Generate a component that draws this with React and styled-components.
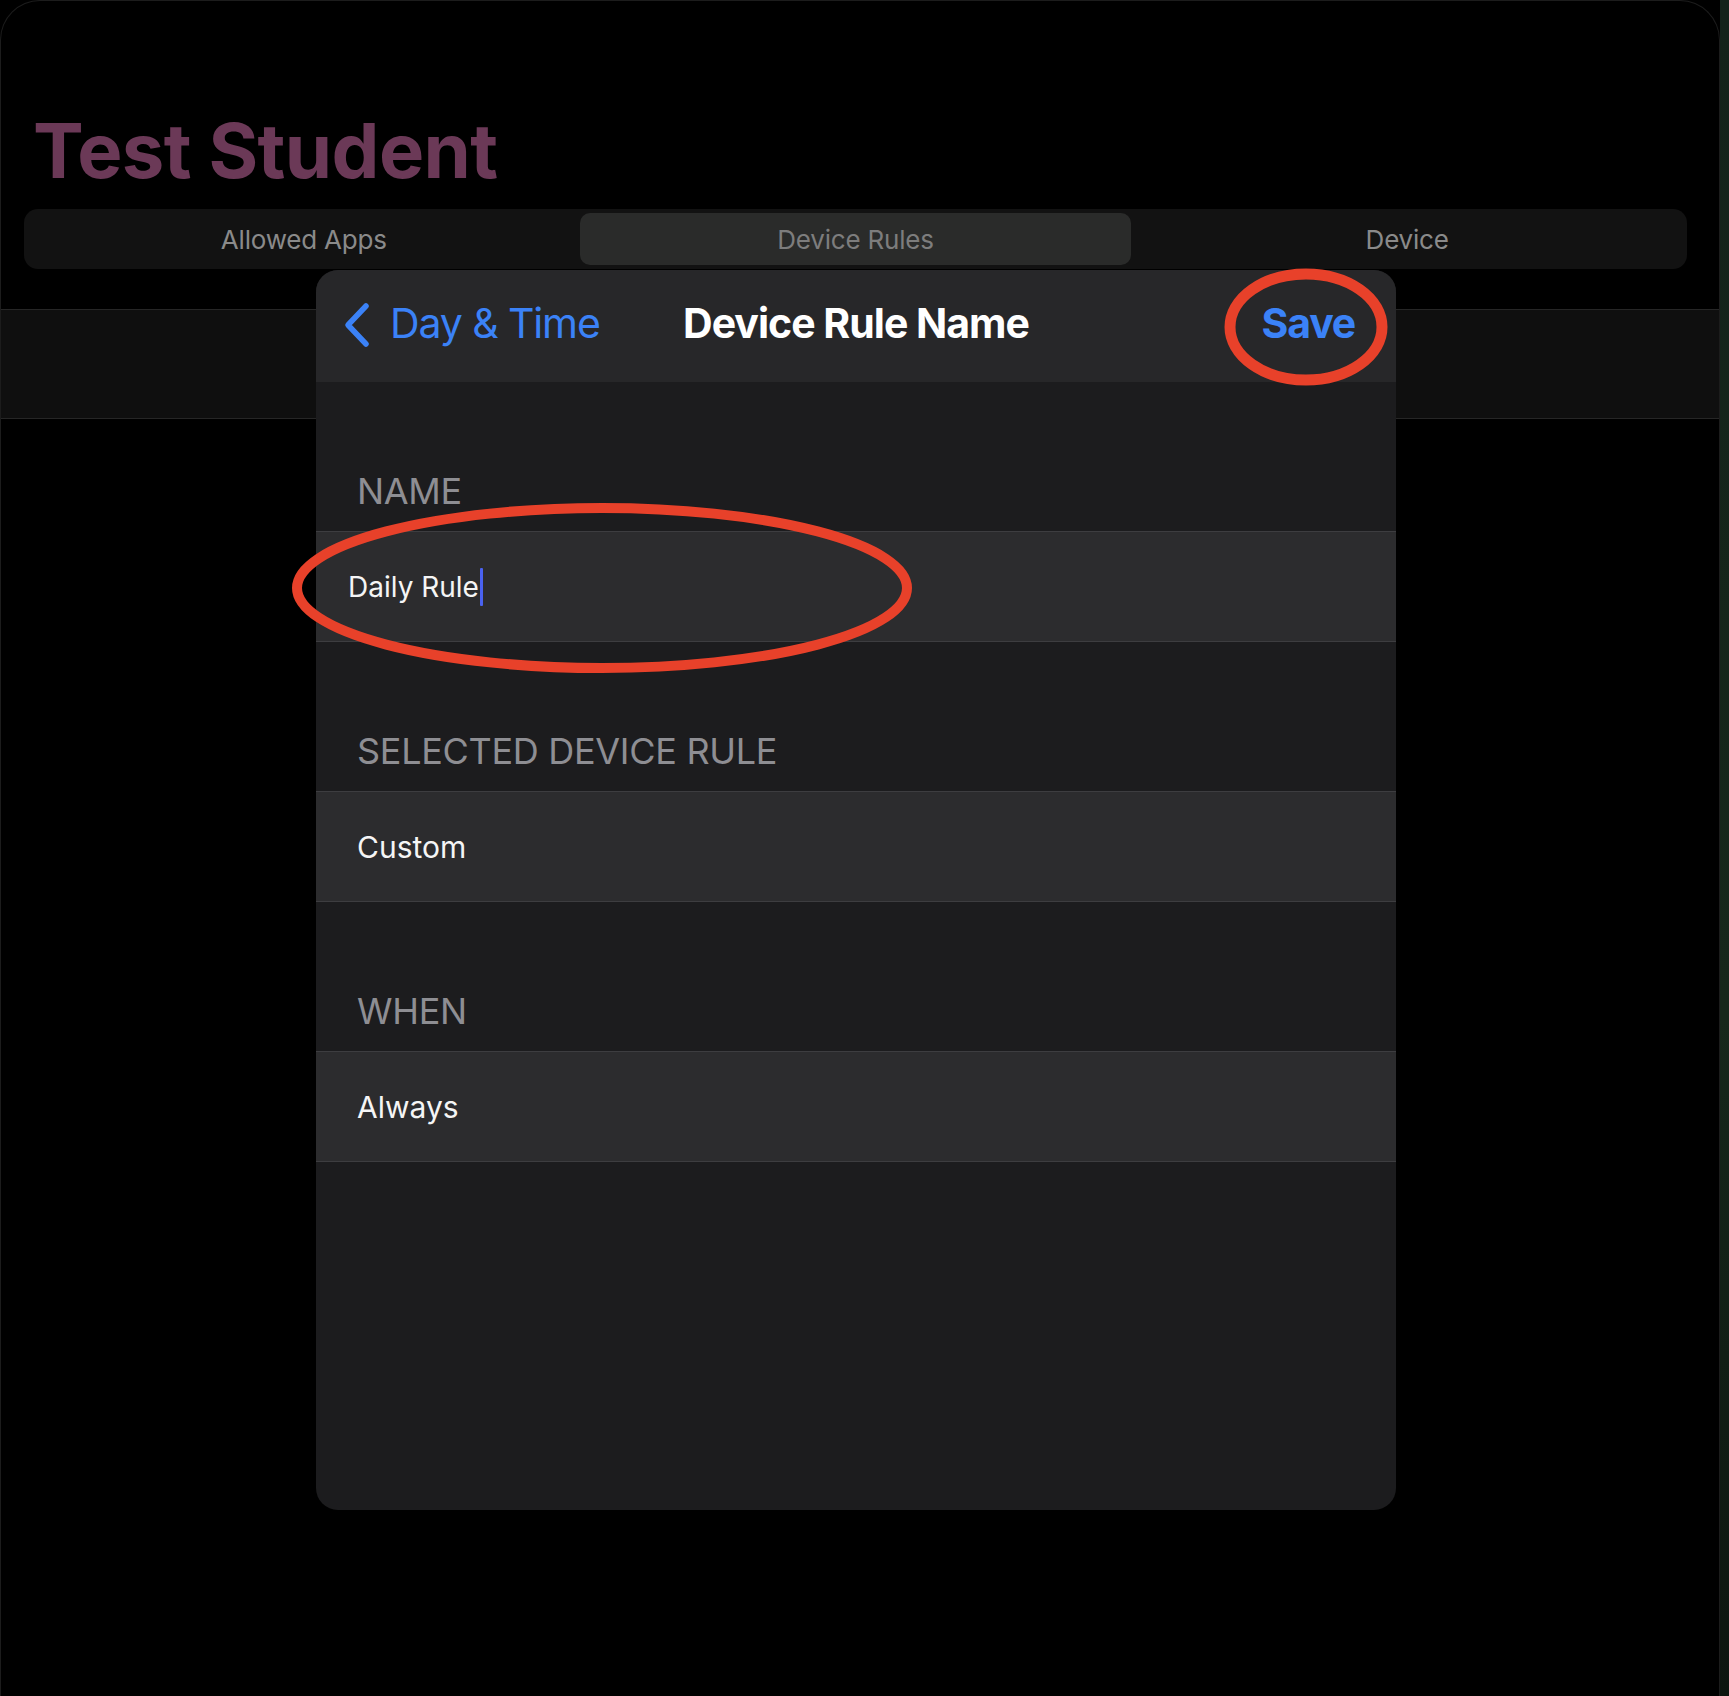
import React from 'react'
import styled, { createGlobalStyle } from 'styled-components'

const GlobalStyle = createGlobalStyle`
    body {
        margin: 0;
        background: #000000;
        font-family: Inter, "Noto Sans", sans-serif;
    }
`

const sections = [
    { title: 'NAME', value: 'Daily Rule', editing: true },
    { title: 'SELECTED DEVICE RULE', value: 'Custom' },
    { title: 'WHEN', value: 'Always' },
]

const tabs = ['Allowed Apps', 'Device Rules', 'Device']

function Chevron() {
    return (
        <svg width="28" height="46" viewBox="0 0 28 46">
            <path d="M23 4 L5 23 L23 42" fill="none" stroke="#3b82f7" strokeWidth="5.5" strokeLinecap="round" strokeLinejoin="round" />
        </svg>
    )
}

function App() {
    return (
        <Page>
            <GlobalStyle />
            <Screen>
                <Title>Test Student</Title>
                <Segmented>
                    {tabs.map((t) => (
                        <Segment key={t} active={t === 'Device Rules'}>{t}</Segment>
                    ))}
                </Segmented>
                <Band />

                <Sheet>
                    <NavBar>
                        <BackButton>
                            <Chevron />
                            <span>Day &amp; Time</span>
                        </BackButton>
                        <NavTitle>Device Rule Name</NavTitle>
                        <SaveButton>Save</SaveButton>
                    </NavBar>
                    {sections.map((s) => (
                        <Section key={s.title}>
                            <SectionHeader>{s.title}</SectionHeader>
                            <Row editing={s.editing}>
                                <RowText small={s.editing}>{s.value}</RowText>
                                {s.editing && <Caret />}
                            </Row>
                        </Section>
                    ))}
                </Sheet>

                <Marks width="1719" height="1696" viewBox="1 0 1719 1696">
                    <ellipse cx="602" cy="587" rx="305" ry="80" fill="none" stroke="#e8412a" strokeWidth="10" />
                    <ellipse cx="1306" cy="326" rx="76" ry="53" fill="none" stroke="#e8412a" strokeWidth="11" />
                </Marks>
            </Screen>
            <EdgeStrip />
        </Page>
    )
}

export default App

const Page = styled.div`
    display: flex;
    width: 1729px;
    min-height: 1696px;
    background: #000000;
`

const Screen = styled.div`
    position: relative;
    width: 1720px;
    min-height: 1696px;
    box-sizing: border-box;
    display: flex;
    flex-direction: column;
    background: #000000;
    border: 1px solid #1c1c1c;
    border-bottom: none;
    border-radius: 40px 40px 0 0;
`

const EdgeStrip = styled.div`
    width: 9px;
    background: linear-gradient(180deg, #13231a 0%, #16281b 60%, #0c160f 100%);
`

const Title = styled.h1`
    margin: 111px 0 0 32px;
    font-size: 76px;
    font-weight: 700;
    line-height: 1;
    letter-spacing: -0.6px;
    color: #6b3957;
`

const Segmented = styled.div`
    margin: 21px 0 0 23px;
    width: 1663px;
    height: 60px;
    box-sizing: border-box;
    padding: 4px;
    display: grid;
    grid-template-columns: repeat(3, 1fr);
    background: #121212;
    border-radius: 14px;
`

const Segment = styled.div`
    display: flex;
    align-items: center;
    justify-content: center;
    font-size: 26px;
    letter-spacing: -0.2px;
    color: ${(p) => (p.active ? '#7d7d7d' : '#8a8a8a')};
    background: ${(p) => (p.active ? '#2a2b2a' : 'transparent')};
    border-radius: 10px;
`

const Band = styled.div`
    margin-top: 40px;
    height: 110px;
    box-sizing: border-box;
    background: #0f0f0f;
    border-top: 1px solid #262626;
    border-bottom: 1px solid #262626;
`

const Sheet = styled.div`
    position: absolute;
    top: 269px;
    left: 315px;
    width: 1080px;
    height: 1240px;
    display: flex;
    flex-direction: column;
    background: #1c1c1e;
    border-radius: 22px;
    overflow: hidden;
`

const NavBar = styled.div`
    height: 112px;
    box-sizing: border-box;
    padding: 0 41px 6px 41px;
    display: grid;
    grid-template-columns: 1fr auto 1fr;
    align-items: center;
    background: #272729;
    font-size: 41px;
    line-height: 1;
`

const BackButton = styled.div`
    display: flex;
    align-items: center;
    gap: 19px;
    margin-left: -14px;
    color: #3b82f7;
    letter-spacing: -1.1px;
    svg {
        margin-top: 4px;
    }
`

const NavTitle = styled.div`
    font-weight: 700;
    color: #ffffff;
    letter-spacing: -1px;
`

const SaveButton = styled.div`
    justify-self: end;
    font-weight: 700;
    color: #3b82f7;
    letter-spacing: -1.2px;
`

const Section = styled.div`
    display: flex;
    flex-direction: column;
`

const SectionHeader = styled.div`
    height: 149px;
    box-sizing: border-box;
    padding: 0 0 22px 41px;
    display: flex;
    align-items: flex-end;
    font-size: 36px;
    line-height: 1;
    color: #8e8e93;
    letter-spacing: -0.3px;
`

const Row = styled.div`
    height: 111px;
    box-sizing: border-box;
    padding-left: ${(p) => (p.editing ? '32px' : '41px')};
    display: flex;
    align-items: center;
    background: #2c2c2e;
    border-top: 1px solid #3d3d40;
    border-bottom: 1px solid #3d3d40;
`

const RowText = styled.span`
    font-size: ${(p) => (p.small ? '28px' : '30px')};
    line-height: 1;
    color: #f5f5f5;
`

const Caret = styled.span`
    width: 3px;
    height: 38px;
    margin-left: 1px;
    background: #4a62f0;
    border-radius: 1px;
`

const Marks = styled.svg`
    position: absolute;
    top: 0;
    left: 0;
    pointer-events: none;
`
